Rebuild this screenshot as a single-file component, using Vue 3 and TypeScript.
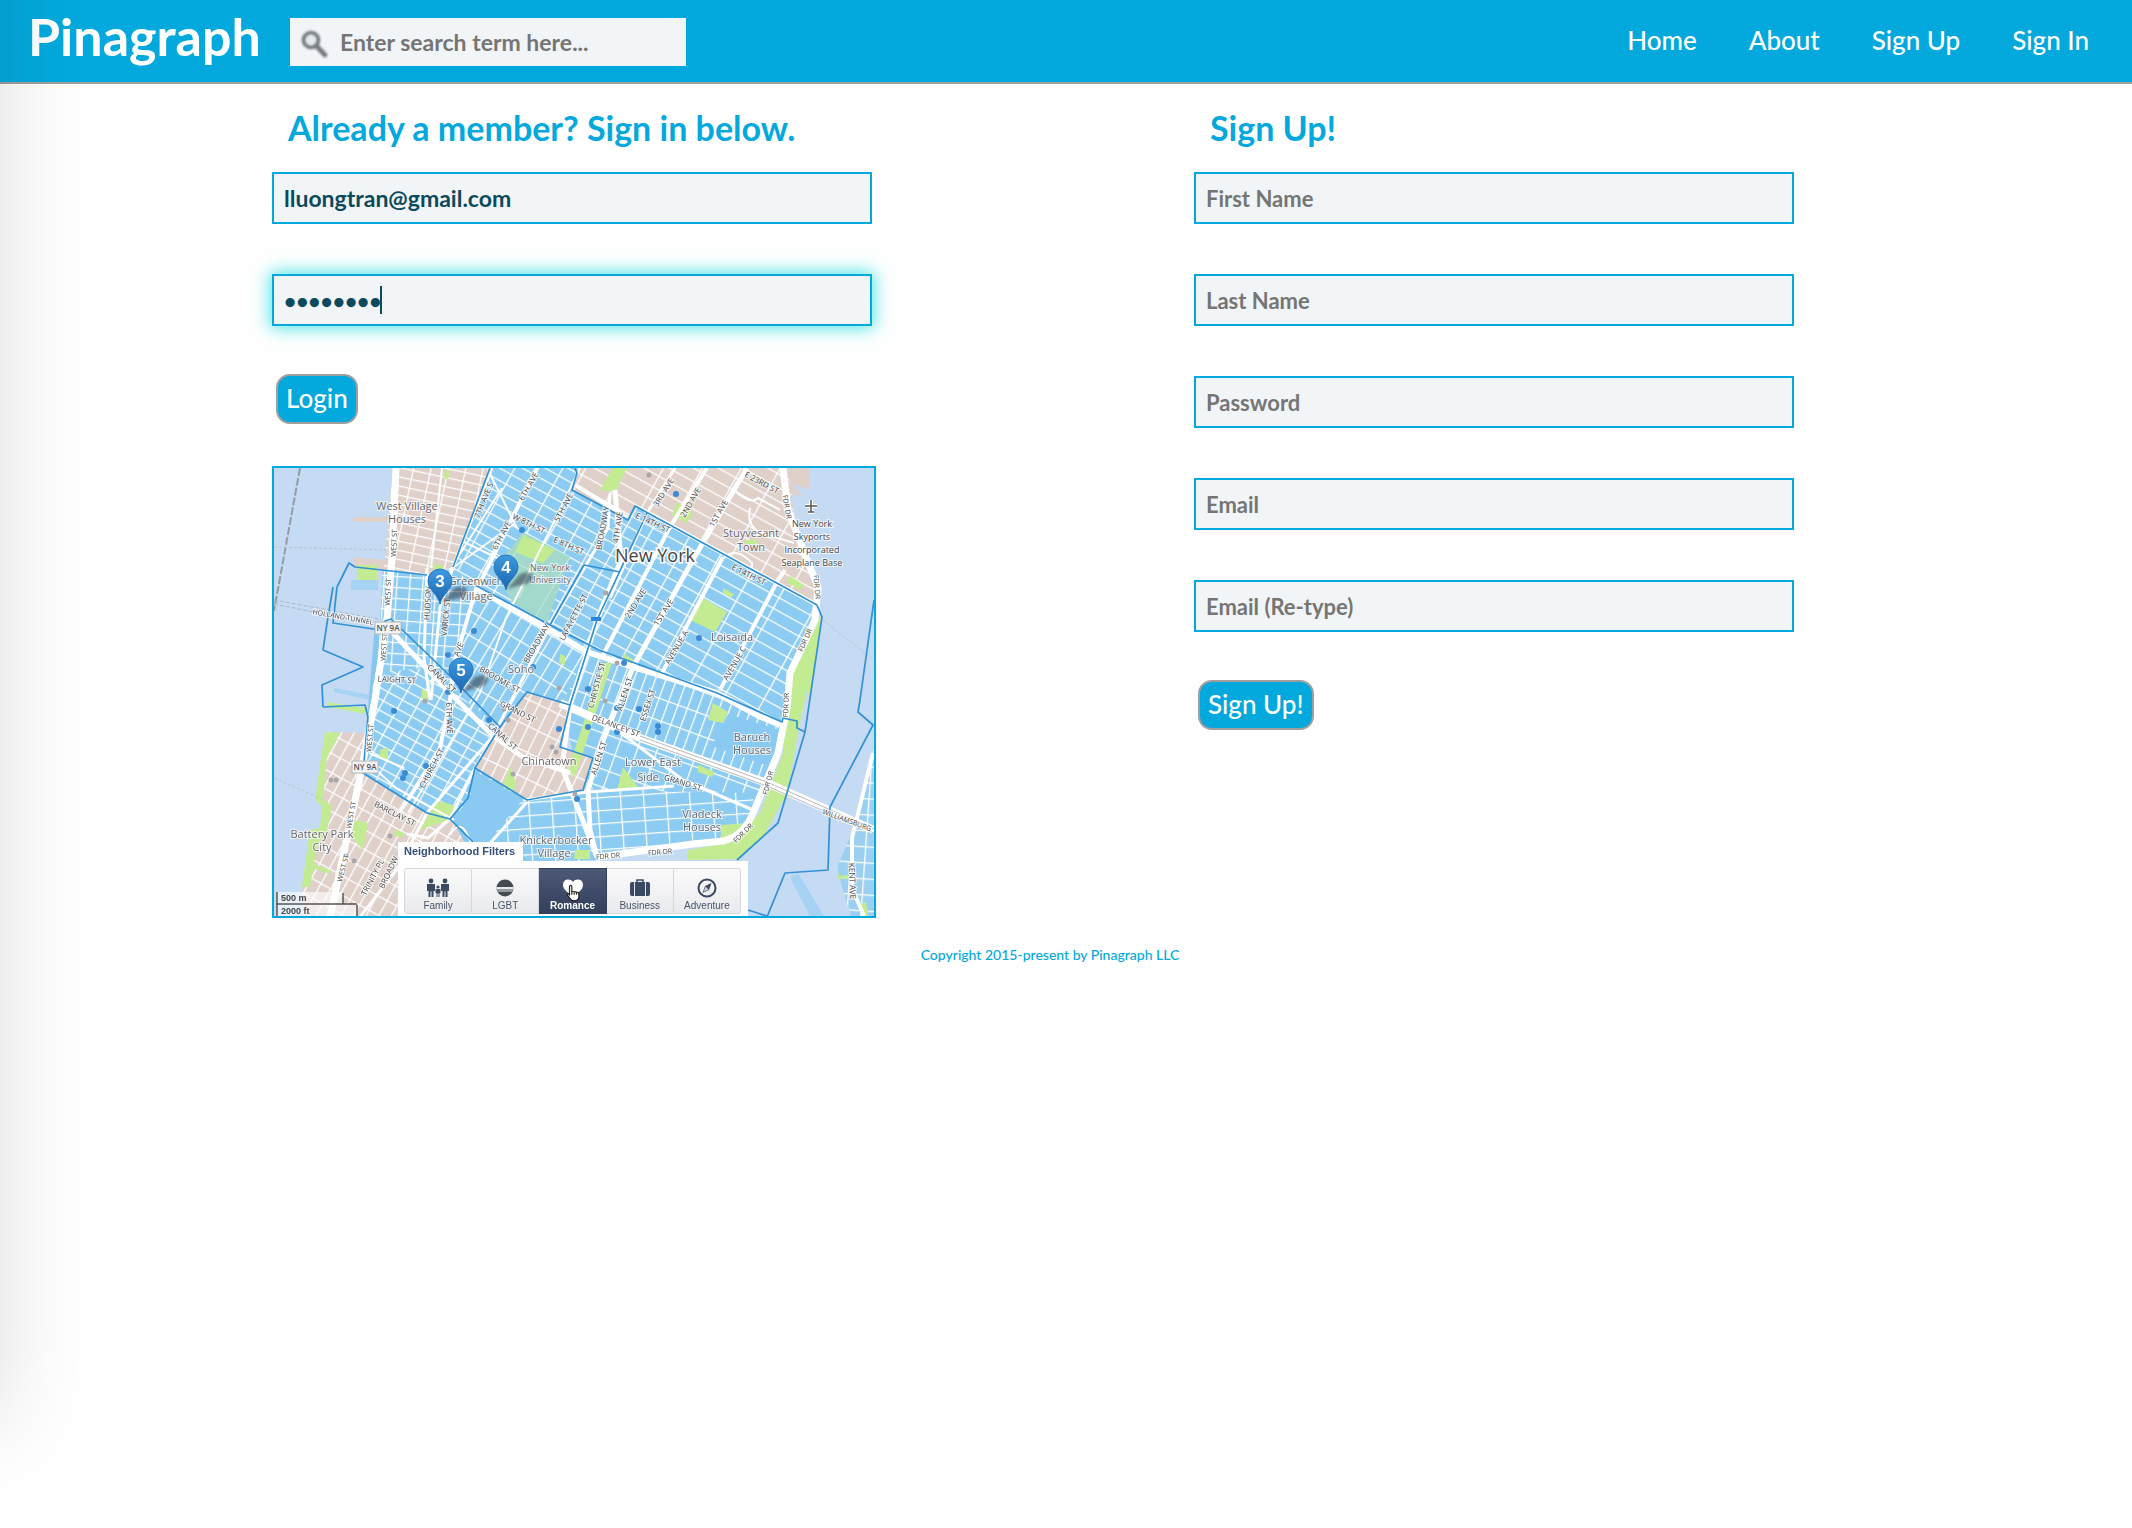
<script setup lang="ts">
import { onMounted, ref } from 'vue'

interface Label { t: string; x: number; y: number; r?: number; s?: number; k?: 'street' | 'place' | 'city' }
interface Zone { id: string; pts: string; fill: string; angle: number; w: number; h: number }

const search = ref('')
const email = ref('lluongtran@gmail.com')
const password = ref('password')
const passwordBox = ref<HTMLInputElement | null>(null)
const activeFilter = ref('Romance')

const links = ['Home', 'About', 'Sign Up', 'Sign In']
const signUpFields = [
  { id: 'first', label: 'First Name', type: 'text' },
  { id: 'last', label: 'Last Name', type: 'text' },
  { id: 'new-password', label: 'Password', type: 'password' },
  { id: 'new-email', label: 'Email', type: 'email' },
  { id: 'retype', label: 'Email (Re-type)', type: 'email' },
]
const filters = ['Family', 'LGBT', 'Romance', 'Business', 'Adventure']

const SAND = '#dfd0ca'
const BLUE = '#8ccbf2'

const zones: Zone[] = [
  { id: 'westvillage', pts: '119,0 218,0 179,101 153,108 110,100', fill: SAND, angle: 12, w: 17, h: 9 },
  { id: 'gramercy', pts: '300,0 514,0 519,39 530,87 543,107 543,137 361,38 354,52 298,22', fill: SAND, angle: 29, w: 34, h: 12 },
  { id: 'hudson', pts: '109,102 153,108 179,99 205,120 176,220 173,235 101,232', fill: BLUE, angle: 4, w: 13, h: 11 },
  { id: 'greenwich', pts: '216,0 303,0 298,22 354,52 361,38 373,45 323,152 313,184 201,119 179,99', fill: BLUE, angle: 29, w: 21, h: 11 },
  { id: 'soho', pts: '203,119 276,160 313,184 296,237 253,224 226,259 173,222', fill: BLUE, angle: 31, w: 12, h: 21 },
  { id: 'tribeca', pts: '101,205 150,200 226,259 201,300 194,330 176,351 153,345 89,305 94,249', fill: BLUE, angle: 29, w: 16, h: 10 },
  { id: 'eastvillage', pts: '371,43 543,137 541,152 516,205 510,256 443,225 313,184', fill: BLUE, angle: 29, w: 36, h: 12 },
  { id: 'lesnorth', pts: '313,184 359,199 443,225 506,257 504,285 493,315 366,270 286,240', fill: BLUE, angle: 20, w: 10, h: 21 },
  { id: 'lessouth', pts: '288,238 366,270 493,318 479,345 459,372 419,375 323,389 319,320 300,290', fill: BLUE, angle: 20, w: 19, h: 17 },
  { id: 'twobridges', pts: '201,300 253,332 320,322 480,325 479,345 459,372 419,378 323,392 249,394 240,394 176,351 194,330', fill: BLUE, angle: -4, w: 23, h: 13 },
  { id: 'chinatown', pts: '253,224 296,237 288,279 319,290 309,322 253,332 201,300 226,259', fill: SAND, angle: 26, w: 11, h: 24 },
  { id: 'downtown', pts: '51,264 92,265 89,305 153,345 176,351 199,374 240,394 240,448 30,448 28,419 36,362 53,362 58,337 41,332', fill: SAND, angle: 29, w: 11, h: 17 },
  { id: 'brooklyn', pts: '600,279 588,332 576,369 563,399 569,422 577,448 600,448', fill: '#9bd0f1', angle: 4, w: 14, h: 16 },
]

const greens = [
  '249,67 281,82 269,95 241,84', '429,130 453,144 441,164 416,152', '339,0 353,0 341,24 326,22',
  '403,34 419,45 413,55 398,47', '84,97 103,97 103,112 84,112', '53,234 91,240 92,246 54,239',
  '548,149 536,232 533,222 524,265 513,325 489,369 466,391 414,392 414,382 459,374 486,345 509,285 514,215 530,185 541,155',
  '329,195 338,195 301,309 294,302', '51,264 66,265 53,289 49,332 58,337 53,362 43,379 36,419 28,419 36,362 46,360 48,338 41,332',
  '79,352 94,355 89,382 78,369', '163,332 184,339 176,352 159,357 146,362 156,345', '236,299 242,315 239,324 228,318',
  '439,235 454,244 449,255 434,252', '349,299 364,319 343,322', '448,357 474,355 456,372 446,372',
  '106,282 114,279 114,291 106,290', '148,221 156,225 153,232 147,230', '516,108 530,117 526,122 513,114',
  '471,72 484,72 482,77 471,76', '349,185 363,194 360,198 349,192', '449,120 460,126 457,130 449,125',
  '563,398 565,408 575,407 575,411 563,411', '586,436 592,434 594,448 588,448', '171,1 176,3 174,11 170,10',
  '286,186 291,188 291,197 285,195', '424,297 441,304 438,309 424,304', '122,361 130,365 128,370 120,367',
  '36,395 56,402 57,406 38,400', '301,382 316,382 316,391 300,391', '159,96 170,98 169,106 160,104',
]

const roads: { d: string; w: number }[] = [
  { d: 'M122 0L118 90L113 152L101 232L86 309L56 449', w: 7 },
  { d: 'M201 119L276 162L313 184L359 199L443 225L485 248L506 257', w: 6 },
  { d: 'M111 152L119 165L173 222L219 268L249 289L296 305', w: 5 },
  { d: 'M218 0L179 99L166 140L157 232', w: 3 },
  { d: 'M263 0L201 125L179 199L176 232L166 280L134 332L124 345', w: 4 },
  { d: 'M306 0L276 62L232 150L206 225L134 345', w: 2 },
  { d: 'M153 100L150 190L156 232', w: 3 },
  { d: 'M168 0L157 100', w: 2 },
  { d: 'M336 25L334 60L276 158L219 268L153 345L124 400L86 449', w: 3 },
  { d: 'M341 22L347 92L323 152L313 184L296 237L288 300', w: 5 },
  { d: 'M401 0L373 45L336 130', w: 3 },
  { d: 'M433 0L396 59L329 187', w: 4 },
  { d: 'M473 0L420 90L359 199L330 270L314 322L316 362L323 389', w: 5 },
  { d: 'M449 89L388 205', w: 4 },
  { d: 'M511 102L504 112L446 222', w: 4 },
  { d: 'M371 43L543 137', w: 4 },
  { d: 'M303 18L354 50', w: 4 },
  { d: 'M509 0L514 42L533 92L544 119L541 152L516 205L513 240L504 285L479 345Q470 368 449 373L419 376L323 389', w: 7 },
  { d: 'M289 302L323 389', w: 5 },
  { d: 'M286 235L366 270L493 315L600 362', w: 8 },
  { d: 'M343 262L409 312L479 342', w: 3 },
  { d: 'M249 332L314 324L400 318', w: 3 },
  { d: 'M253 334L200 393', w: 3 },
  { d: 'M201 300L176 351L154 370L133 366', w: 3 },
  { d: 'M214 2L243 60M180 99L240 56M182 92L228 20M190 74L240 98', w: 2 },
  { d: 'M89 290L122 320L180 352M95 285L130 300', w: 2 },
  { d: 'M599 285L578 370L578 420L590 448', w: 4 },
  { d: 'M176 367Q186 350 194 368T208 392', w: 2 },
  { d: 'M476 40Q472 60 490 66L520 75M450 90Q462 78 478 95L477 112M458 20Q476 38 484 30L506 42', w: 2 },
]

const borders = [
  'M49 239L48 217L89 199L49 182L54 149L59 119', 'M63 119L75 95L81 99L153 107', 'M63 119L59 155L106 162L111 153L117 151L173 205',
  'M49 239L91 237L94 249L89 305L153 345L176 351L199 374', 'M173 205L226 259L201 300L194 330L176 351',
  'M216 0L179 99', 'M201 117L276 157L325 182L443 225L508 254L509 250L523 253L523 260L531 264',
  'M301 0L303 5L298 22L354 52L361 38L543 137', 'M373 45L323 152L296 237L253 224L226 259',
  'M276 157L310 97L346 104', 'M296 237L286 279L319 290L309 322L253 332L201 300',
  'M543 137L548 149L531 264L504 355L463 392', 'M600 132L586 232L584 244L599 257L556 339L554 402L511 405L493 449', 'M474 442L493 448',
]

const dots = [
  [248, 62], [200, 163], [174, 187], [171, 158], [174, 224], [120, 243], [131, 305], [129, 310], [152, 298], [215, 252],
  [259, 199], [285, 261], [402, 26], [425, 170], [350, 195], [314, 221], [343, 240], [365, 241], [314, 259], [343, 264],
  [384, 258], [384, 264], [303, 331], [176, 254],
]
const greyDots = [[375, 7], [332, 125], [343, 195], [285, 220], [230, 241], [234, 252], [278, 279], [282, 284], [57, 312], [62, 312], [239, 306], [116, 368], [80, 393], [72, 388], [151, 233], [331, 233], [301, 326]]

const labels: Label[] = [
  { t: 'West Village', x: 133, y: 37, s: 11, k: 'place' }, { t: 'Houses', x: 133, y: 50, s: 11, k: 'place' },
  { t: 'WEST ST', x: 120, y: 75, r: -88, s: 7 }, { t: 'WEST ST', x: 114, y: 124, r: -88, s: 7 }, { t: 'WEST ST', x: 110, y: 179, r: -86, s: 7 },
  { t: 'WEST ST', x: 96, y: 270, r: -85, s: 7 }, { t: 'WEST ST', x: 77, y: 347, r: -80, s: 7 }, { t: 'WEST ST', x: 69, y: 400, r: -75, s: 7 },
  { t: '7TH AVE S', x: 209, y: 32, r: -68 }, { t: '6TH AVE', x: 254, y: 18, r: -60 }, { t: '6TH AVE', x: 227, y: 67, r: -62 },
  { t: '5TH AVE', x: 289, y: 39, r: -62 }, { t: 'W 8TH ST', x: 255, y: 55, r: 26 }, { t: 'E 8TH ST', x: 295, y: 77, r: 24 },
  { t: 'New York', x: 276, y: 99, s: 9, k: 'place' }, { t: 'University', x: 276, y: 111, s: 9, k: 'place' },
  { t: 'Greenwich', x: 202, y: 112, s: 11, k: 'place' }, { t: 'Village', x: 202, y: 127, s: 11, k: 'place' },
  { t: 'HUDSON', x: 153, y: 135, r: -87 }, { t: 'VARICK ST', x: 171, y: 149, r: -84 }, { t: 'HOLLAND TUNNEL', x: 69, y: 149, r: 10, s: 7 },
  { t: 'LAIGHT ST', x: 123, y: 211, r: 3 }, { t: 'CANAL ST', x: 168, y: 210, r: 45 }, { t: 'AVE', x: 184, y: 181, r: -70 },
  { t: 'BROOME ST', x: 226, y: 211, r: 30 }, { t: 'BROADWAY', x: 262, y: 175, r: -60 }, { t: 'Soho', x: 247, y: 200, s: 11, k: 'place' },
  { t: 'LAFAYETTE ST', x: 299, y: 149, r: -62 }, { t: 'BROADWAY', x: 328, y: 60, r: -80 }, { t: '4TH AVE', x: 343, y: 59, r: -82 },
  { t: '3RD AVE', x: 389, y: 24, r: -58 }, { t: '2ND AVE', x: 416, y: 34, r: -60 }, { t: '1ST AVE', x: 444, y: 45, r: -60 },
  { t: 'E 23RD ST', x: 488, y: 14, r: 28 }, { t: 'FDR DR', x: 513, y: 39, r: 80, s: 7 }, { t: 'FDR DR', x: 543, y: 119, r: 85, s: 7 },
  { t: 'FDR DR', x: 531, y: 172, r: -65, s: 7 }, { t: 'Stuyvesant', x: 477, y: 64, s: 11, k: 'place' }, { t: 'Town', x: 477, y: 78, s: 11, k: 'place' },
  { t: 'New York', x: 538, y: 55, s: 9 }, { t: 'Skyports', x: 538, y: 68, s: 9 }, { t: 'Incorporated', x: 538, y: 81, s: 9 }, { t: 'Seaplane Base', x: 538, y: 94, s: 9 },
  { t: 'E 14TH ST', x: 379, y: 54, r: 25 }, { t: 'E 14TH ST', x: 475, y: 106, r: 26 }, { t: 'New York', x: 381, y: 87, s: 18, k: 'city' },
  { t: '2ND AVE', x: 361, y: 135, r: -58 }, { t: '1ST AVE', x: 389, y: 144, r: -58 }, { t: 'AVENUE A', x: 402, y: 179, r: -60 },
  { t: 'AVENUE C', x: 460, y: 195, r: -60 }, { t: 'Loisaida', x: 458, y: 168, s: 11, k: 'place' }, { t: 'CHRYSTIE ST', x: 322, y: 217, r: -75 },
  { t: 'ALLEN ST', x: 350, y: 226, r: -72 }, { t: 'ESSEX ST', x: 373, y: 237, r: -72 }, { t: 'DELANCEY ST', x: 342, y: 257, r: 20 },
  { t: 'ALLEN ST', x: 324, y: 290, r: -72 }, { t: 'Lower East', x: 379, y: 293, s: 11, k: 'place' }, { t: 'Side', x: 374, y: 308, s: 11, k: 'place' },
  { t: 'GRAND ST', x: 409, y: 314, r: 17 }, { t: 'Baruch', x: 478, y: 268, s: 11, k: 'place' }, { t: 'Houses', x: 478, y: 281, s: 11, k: 'place' },
  { t: 'FDR DR', x: 512, y: 237, r: -88, s: 7 }, { t: 'FDR DR', x: 494, y: 315, r: -75, s: 7 }, { t: 'FDR DR', x: 469, y: 365, r: -45, s: 7 },
  { t: 'FDR DR', x: 386, y: 384, r: -5, s: 7 }, { t: 'FDR DR', x: 334, y: 388, r: -5, s: 7 }, { t: 'Vladeck', x: 428, y: 345, s: 11, k: 'place' },
  { t: 'Houses', x: 428, y: 358, s: 11, k: 'place' }, { t: 'WILLIAMSBURG', x: 573, y: 352, r: 20, s: 7 }, { t: 'KENT AVE', x: 579, y: 413, r: 88 },
  { t: 'GRAND ST', x: 244, y: 243, r: 27 }, { t: 'CANAL ST', x: 229, y: 268, r: 42 }, { t: '6TH AVE', x: 176, y: 250, r: 88 },
  { t: 'CHURCH ST', x: 157, y: 300, r: -62 }, { t: 'Chinatown', x: 275, y: 292, s: 11, k: 'place' }, { t: 'BARCLAY ST', x: 121, y: 345, r: 27 },
  { t: 'Battery Park', x: 48, y: 365, s: 11, k: 'place' }, { t: 'City', x: 48, y: 378, s: 11, k: 'place' }, { t: 'TRINITY PL', x: 98, y: 409, r: -62 },
  { t: 'BROADW', x: 114, y: 404, r: -65 }, { t: 'Knickerbocker', x: 282, y: 371, s: 11, k: 'place' }, { t: 'Village', x: 280, y: 384, s: 11, k: 'place' },
]

const pins = [{ n: 3, x: 166, y: 136 }, { n: 4, x: 232, y: 122 }, { n: 5, x: 187, y: 225 }]

onMounted(() => passwordBox.value?.focus())
</script>

<template>
  <div class="page">
    <header class="bar">
      <a class="logo" href="#">Pinagraph</a>
      <label class="search">
        <svg class="lens" viewBox="0 0 28 28" aria-hidden="true">
          <circle cx="11" cy="10" r="7.5" fill="#e4e9ee" stroke="#75797f" stroke-width="3.6" />
          <path d="M16.500 16L25 25" stroke="#75797f" stroke-width="4.8" stroke-linecap="round" />
        </svg>
        <input v-model="search" type="search" aria-label="Search" placeholder="Enter search term here..." />
      </label>
      <nav class="links">
        <a v-for="l in links" :key="l" href="#">{{ l }}</a>
      </nav>
    </header>

    <aside class="drawer" aria-hidden="true"></aside>

    <main class="columns">
      <section>
        <h2>Already a member? Sign in below.</h2>
        <form @submit.prevent>
          <input v-model="email" class="field address" type="email" aria-label="Email" />
          <div class="focus-wrap">
            <input ref="passwordBox" v-model="password" class="field glow" type="password" aria-label="Password" />
            <span class="caret"></span>
          </div>
          <button class="action" type="submit">Login</button>
        </form>

        <div class="map">
          <svg viewBox="0 0 600 448" class="city" role="img" aria-label="Map of lower Manhattan">
            <defs>
              <pattern v-for="z in zones" :id="'g-' + z.id" :key="z.id" :width="z.w" :height="z.h" patternUnits="userSpaceOnUse" :patternTransform="`rotate(${z.angle})`">
                <rect :width="z.w" :height="z.h" :fill="z.fill" />
                <path :d="`M0 0H${z.w}M0 0V${z.h}`" stroke="#fff" stroke-width="2.600" />
              </pattern>
              <linearGradient id="pin" x1="0" y1="0" x2="0" y2="1">
                <stop offset="0" stop-color="#3d9be0" /><stop offset="1" stop-color="#1b64ae" />
              </linearGradient>
              <filter id="soft" x="-30%" y="-30%" width="160%" height="160%"><feGaussianBlur stdDeviation="1.500" /></filter>
            </defs>
            <rect width="600" height="448" fill="#c5dbf3" />
            <path d="M79 49H114V54H79zM79 89L112 92V103L79 98zM514 0H536V22L519 16L528 28L516 26z" fill="#dfd0ca" />
            <path d="M77 112H104V122H77zM60 220L101 228V233L60 224zM516 410L524 405L550 448H536z" fill="#a6d3f3" />
            <path d="M101 155L92 265L101 265L110 155z" fill="#86c7f0" />
            <polygon v-for="z in zones" :key="z.id" :points="z.pts" :fill="`url(#g-${z.id})`" />
            <polygon points="249,64 296,89 273,155 239,135 219,102" fill="#a3d9cd" />
            <path d="M233 90L283 116M252 66L226 112M296 89L262 148M270 75L245 130" stroke="#c9ead9" stroke-width="1" fill="none" />
            <path d="M201 303L249 331L200 390L178 352L196 330zM454 246L506 262L500 300L438 278z" fill="#8acaf2" />
            <polygon v-for="g in greens" :key="g" :points="g" fill="#c3ec92" />
            <g fill="none" stroke="#fff" stroke-linejoin="round">
              <path v-for="r in roads" :key="r.d" :d="r.d" :stroke-width="r.w" />
            </g>
            <path d="M366 268L493 314L600 361M366 272L493 318L600 365" fill="none" stroke="#b9b9b9" stroke-width="1" />
            <path d="M26 0L0 143" fill="none" stroke="#949ba3" stroke-width="2" stroke-dasharray="8 2" />
            <path d="M0 79L115 82M0 310L50 332M549 152L600 192" fill="none" stroke="#b6c6da" stroke-dasharray="3 2" />
            <path d="M0 132L109 152M0 136L109 158" fill="none" stroke="#aab8c8" stroke-dasharray="4 2" />
            <g fill="none" stroke="#3191d4" stroke-width="1.700" stroke-linejoin="round">
              <path v-for="b in borders" :key="b" :d="b" />
            </g>
            <circle v-for="(d, i) in greyDots" :key="'q' + i" :cx="d[0]" :cy="d[1]" r="2.500" fill="#aaa7a6" />
            <circle v-for="(d, i) in dots" :key="'d' + i" :cx="d[0]" :cy="d[1]" r="3" fill="#3a8bd6" />
            <rect x="317" y="149" width="10" height="4" fill="#2f86d2" />
            <g fill="#f3f3f3" stroke="#b8b8b8"><rect x="101" y="154" width="26" height="12" /><rect x="78" y="293" width="26" height="12" /></g>
            <text x="114" y="163" class="tag">NY 9A</text>
            <text x="91" y="302" class="tag">NY 9A</text>
            <text
              v-for="(l, i) in labels" :key="'t' + i" :class="l.k ?? 'street'" :font-size="l.s ?? 8"
              :transform="`translate(${l.x} ${l.y}) rotate(${l.r ?? 0})`" text-anchor="middle" dominant-baseline="central"
            >{{ l.t }}</text>
            <path d="M537 32V44M531 38H543M534 44H540" stroke="#fff" stroke-width="4" />
            <path d="M537 32V44M531 38H543M534 44H540" stroke="#555" stroke-width="1.500" />
            <g v-for="p in pins" :key="p.n" :transform="`translate(${p.x} ${p.y})`">
              <path d="M1 -1L14 -16Q26 -20 27 -13Q25 -6 15 -5z" fill="#34434f" opacity=".6" filter="url(#soft)" />
              <path d="M0 0C-2 -10 -12 -14 -12 -23A12 12 0 0 1 12 -23C12 -14 2 -10 0 0z" fill="url(#pin)" stroke="#2a76bf" />
              <text y="-17" class="num">{{ p.n }}</text>
            </g>
            <path d="M2 424H69V437H83V448H2z" fill="#fff" opacity=".6" />
            <path d="M3 424V448M2 436H83M69 425V436M83 437V448" fill="none" stroke="#555" stroke-width="1.500" />
            <text x="7" y="433" class="scale">500 m</text>
            <text x="7" y="446" class="scale">2000 ft</text>
          </svg>

          <div class="filters">
            <strong>Neighborhood Filters</strong>
            <div class="choices">
              <button v-for="f in filters" :key="f" type="button" :class="{ on: f === activeFilter }" @click="activeFilter = f">
                <svg viewBox="0 0 24 20" aria-hidden="true">
                  <g v-if="f === 'Family'" fill="#3a4a60">
                    <circle cx="5" cy="3" r="2.400" /><circle cx="19" cy="3" r="2.400" /><circle cx="12" cy="9" r="1.600" />
                    <path d="M1 6H9V13H7.500V19H5.500V13.500H4.500V19H2.500V13H1zM15 6H23V13H21.500V19H19.500V13.500H18.500V19H16.500V13H15zM9.500 11H14.500V15H13.500V19H12.500V15.500H11.500V19H10.500V15H9.500z" />
                  </g>
                  <g v-else-if="f === 'LGBT'">
                    <circle cx="12" cy="10" r="8.500" fill="#454a52" />
                    <path d="M3.500 9H20.500V11H3.500z" fill="#e8e8ea" /><path d="M3.800 11H20.200L19.500 14H4.500z" fill="#9599a0" />
                  </g>
                  <path v-else-if="f === 'Romance'" d="M12 19C8 15 2 12 2 7C2 1 9 0 12 4C15 0 22 1 22 7C22 12 16 15 12 19z" fill="#fff" />
                  <g v-else-if="f === 'Business'">
                    <path d="M9 5V2H15V5" fill="none" stroke="#3a4a60" stroke-width="1.500" />
                    <rect x="2" y="4" width="20" height="14" rx="2" fill="#3a4a60" />
                    <path d="M6.500 4V18M17.500 4V18" stroke="#dfe3ea" />
                  </g>
                  <g v-else>
                    <circle cx="12" cy="10" r="8.500" fill="none" stroke="#3a4a60" stroke-width="2" />
                    <path d="M16.500 5L14 12L7.500 15L10 8z" fill="#3a4a60" /><path d="M10.500 8.500L13.500 11.500L8.500 14z" fill="#c9ced6" />
                  </g>
                </svg>
                <span>{{ f }}</span>
              </button>
            </div>
            <svg class="hand" viewBox="0 0 12 15" aria-hidden="true">
              <path d="M3 9V2Q4 0 5 2V6L10 7Q11 7 11 9V12L9 14H5L1 9Q1 7 3 9z" fill="#fff" stroke="#222" />
              <path d="M5 6V9M7 7V9M9 7V9" stroke="#222" />
            </svg>
          </div>
        </div>
      </section>

      <section>
        <h2>Sign Up!</h2>
        <form @submit.prevent>
          <input v-for="f in signUpFields" :key="f.id" class="field" :type="f.type" :placeholder="f.label" :aria-label="f.label" />
          <button class="action" type="submit">Sign Up!</button>
        </form>
      </section>
    </main>

    <footer>Copyright 2015-present by Pinagraph LLC</footer>
  </div>
</template>

<style>
body { margin: 0; background: #fefefe; }
</style>

<style scoped>
.page { font-family: Lato, "Open Sans", sans-serif; color: #03a9dc; }
.page *, .page { box-sizing: border-box; }
.bar { display: flex; align-items: center; height: 84px; padding: 2px 43px 0 28px; background: #03a9dc; border-bottom: 2px solid #9f9f9f; }
.logo { width: 262px; color: #fff; font-size: 52px; font-weight: 700; line-height: 64px; text-decoration: none; padding-bottom: 12px; }
.search { display: flex; align-items: center; width: 396px; height: 48px; padding-left: 10px; background: #f2f5f8; }
.lens { width: 28px; height: 28px; margin-top: 4px; filter: blur(1px); }
.search input { flex: 1; min-width: 0; margin-left: 12px; padding: 0; border: 0; outline: 0; background: none; font: 700 23px/28px Lato, sans-serif; color: #0b4a5c; }
input::placeholder { color: #757575; opacity: 1; }
.links { display: flex; gap: 52px; margin-left: auto; padding-bottom: 4px; }
.links a { color: #fff; font-size: 26px; font-weight: 500; line-height: 32px; text-decoration: none; }

.drawer { position: fixed; top: -110px; bottom: 110px; left: -300px; width: 300px; box-shadow: 0 0 80px rgba(0, 0, 0, .13); pointer-events: none; }

.columns { display: grid; grid-template-columns: 1fr 1fr; padding: 0 16px 0 272px; }
h2 { margin: 24px 0 24px 16px; font-size: 34px; line-height: 40px; font-weight: 700; }
form { display: flex; flex-direction: column; align-items: flex-start; gap: 50px; }
.field { display: block; width: 100%; max-width: 600px; height: 52px; padding: 0 10px; border: 2px solid #03a9dc; border-radius: 0; outline: 0; background: #f2f5f8; color: #0b4a5c; font: 700 22px/28px Lato, sans-serif; }
.address { font-size: 23px; }
.focus-wrap { position: relative; width: 100%; }
.glow { font-size: 21px; box-shadow: 0 0 16px 2px #4fe6e6; caret-color: transparent; }
.caret { position: absolute; top: 12px; left: 108px; width: 2px; height: 28px; background: #0b4a5c; }
.action { height: 50px; margin: -2px 0 0 4px; padding: 0 8px 2px; border: 2px solid #9f9f9f; border-radius: 14px; background: #03a9dc; color: #fff; font: 500 26px/32px Lato, sans-serif; }

.map { position: relative; width: 604px; margin-top: 42px; border: 2px solid #03a9dc; overflow: hidden; }
.city { display: block; width: 100%; height: auto; }
.city text { font-family: "Open Sans", "Noto Sans", sans-serif; }
.street { fill: #444; font-weight: 500; stroke: #fff; stroke-width: 2px; stroke-opacity: .75; paint-order: stroke; }
.place { fill: #66666b; stroke: #fff; stroke-width: 2px; stroke-opacity: .75; paint-order: stroke; }
.city .city { fill: #444; stroke: #fff; stroke-width: 3px; font-weight: 500; paint-order: stroke; }
.tag { fill: #555; font-size: 8px; font-weight: 600; text-anchor: middle; }
.city .num { fill: #fff; font: 700 17px "Liberation Sans", sans-serif; text-anchor: middle; }
.city .scale { fill: #444; font: 700 9px "Liberation Sans", sans-serif; }

.filters { position: absolute; left: 124px; bottom: 0; width: 350px; font-family: "Liberation Sans", sans-serif; }
.filters strong { display: block; width: 125px; height: 19px; padding-left: 6px; background: #fff; color: #35507c; font-size: 11px; line-height: 19px; white-space: nowrap; }
.choices { display: flex; height: 55px; padding: 7px 7px 2px 6px; background: #fff; }
.choices button { flex: 1 1 0; min-width: 0; display: flex; flex-direction: column; align-items: center; gap: 2px; padding: 9px 0 0; border: 1px solid #d5d7db; border-left-width: 0; background: linear-gradient(#fafafb, #e9eaed); color: #47546a; font: 10px/12px "Liberation Sans", sans-serif; }
.choices button:first-child { border-left-width: 1px; border-radius: 3px 0 0 3px; }
.choices button:last-child { border-radius: 0 3px 3px 0; }
.choices svg { width: 24px; height: 20px; }
.choices .on { background: linear-gradient(#4c5977, #333f5b); border-color: #333f5b; color: #fff; font-weight: 700; }
.hand { position: absolute; right: 168px; bottom: 14px; width: 14px; height: 18px; }

footer { padding: 25px 32px 40px 0; text-align: center; font-size: 14px; font-weight: 500; line-height: 24px; }
</style>
